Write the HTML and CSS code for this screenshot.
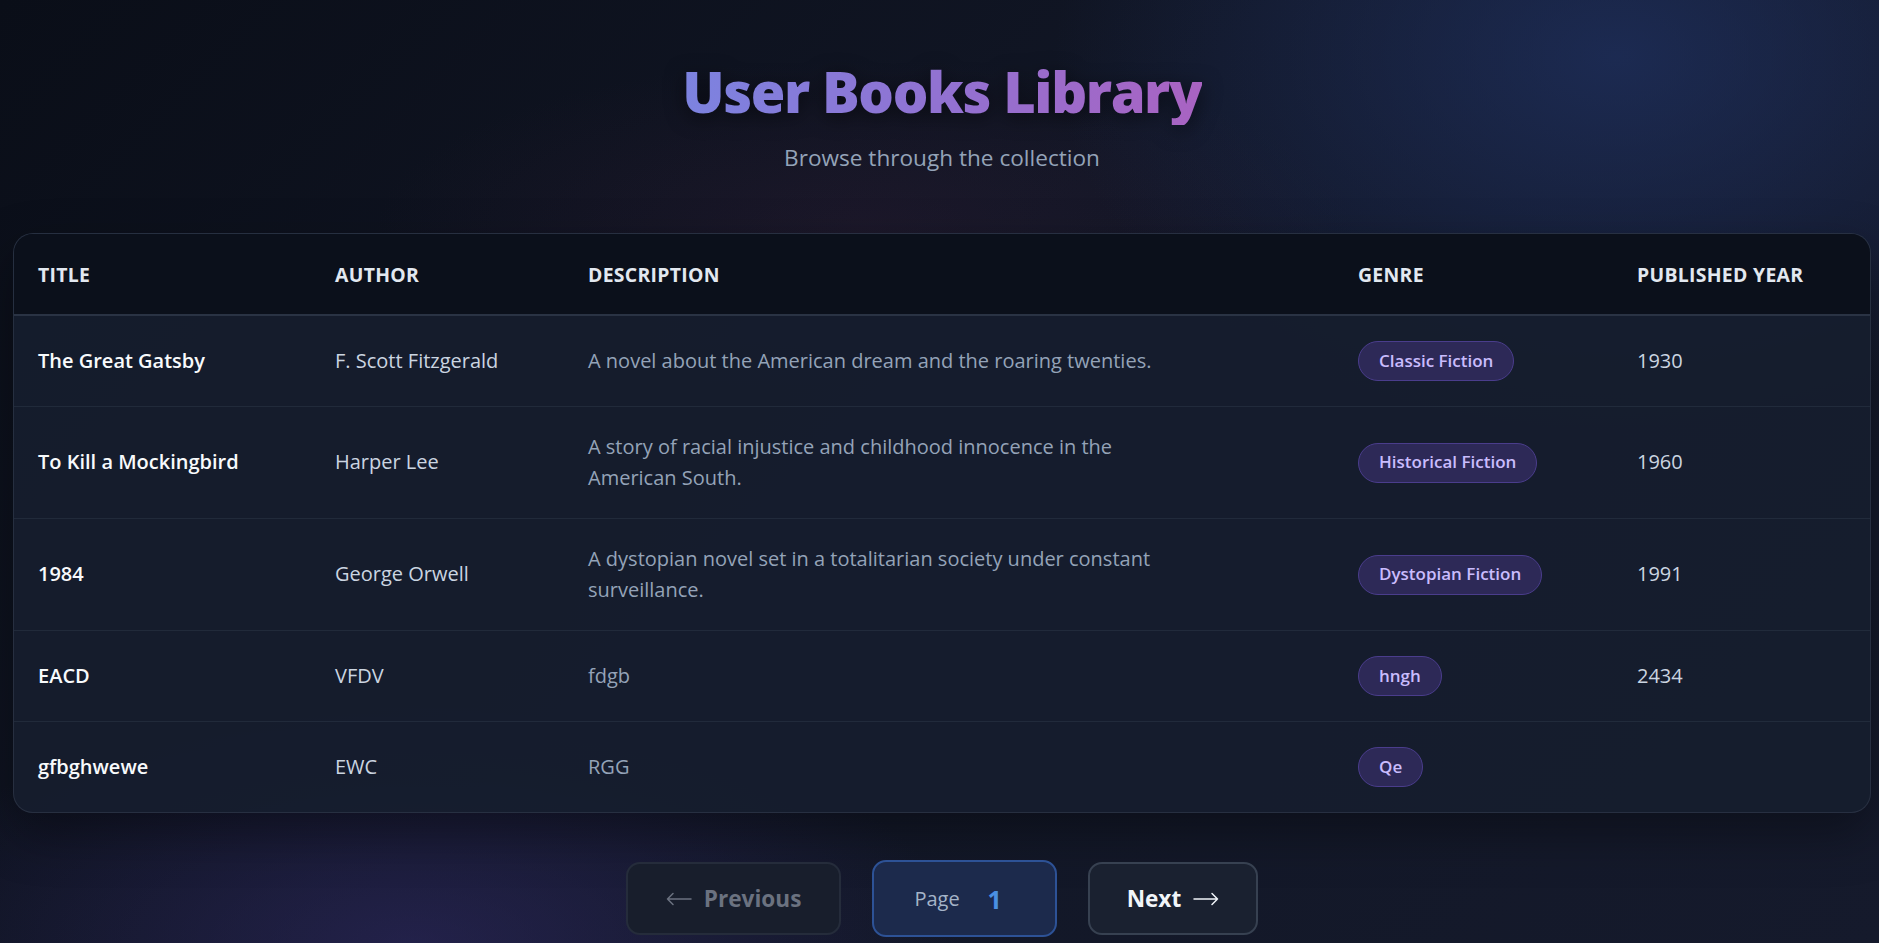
FILE: index.html
```html
<!DOCTYPE html>
<html lang="en">
<head>
<meta charset="utf-8">
<title>User Books Library</title>
<link rel="stylesheet" href="styles.css">
</head>
<body>
<div class="page">
  <header class="hero">
    <h1 class="hero-title">User Books Library</h1>
    <p class="hero-sub">Browse through the collection</p>
  </header>

  <div class="card">
    <table class="books">
      <colgroup>
        <col class="c-title">
        <col class="c-author">
        <col class="c-desc">
        <col class="c-genre">
        <col class="c-year">
      </colgroup>
      <thead>
        <tr>
          <th>Title</th>
          <th>Author</th>
          <th>Description</th>
          <th>Genre</th>
          <th>Published Year</th>
        </tr>
      </thead>
      <tbody>
        <tr>
          <td class="t-title">The Great Gatsby</td>
          <td class="t-author">F. Scott Fitzgerald</td>
          <td class="t-desc"><div class="desc">A novel about the American dream and the roaring twenties.</div></td>
          <td><span class="badge">Classic Fiction</span></td>
          <td class="t-year">1930</td>
        </tr>
        <tr>
          <td class="t-title">To Kill a Mockingbird</td>
          <td class="t-author">Harper Lee</td>
          <td class="t-desc"><div class="desc">A story of racial injustice and childhood innocence in the American South.</div></td>
          <td><span class="badge">Historical Fiction</span></td>
          <td class="t-year">1960</td>
        </tr>
        <tr>
          <td class="t-title">1984</td>
          <td class="t-author">George Orwell</td>
          <td class="t-desc"><div class="desc">A dystopian novel set in a totalitarian society under constant surveillance.</div></td>
          <td><span class="badge">Dystopian Fiction</span></td>
          <td class="t-year">1991</td>
        </tr>
        <tr>
          <td class="t-title">EACD</td>
          <td class="t-author">VFDV</td>
          <td class="t-desc"><div class="desc">fdgb</div></td>
          <td><span class="badge">hngh</span></td>
          <td class="t-year">2434</td>
        </tr>
        <tr>
          <td class="t-title">gfbghwewe</td>
          <td class="t-author">EWC</td>
          <td class="t-desc"><div class="desc">RGG</div></td>
          <td><span class="badge">Qe</span></td>
          <td class="t-year"></td>
        </tr>
      </tbody>
    </table>
  </div>

  <nav class="pager">
    <button class="pbtn pbtn-prev" disabled>
      <svg class="arrow" width="26" height="14" viewBox="0 0 26 14" aria-hidden="true"><path d="M25 7H1.5M7 1.5L1.5 7l5.5 5.5" fill="none" stroke="currentColor" stroke-width="1.5" stroke-linecap="round" stroke-linejoin="round"/></svg>
      <span>Previous</span>
    </button>
    <div class="pbtn pbtn-page">Page <span class="pnum">1</span></div>
    <button class="pbtn pbtn-next">
      <span>Next</span>
      <svg class="arrow" width="26" height="14" viewBox="0 0 26 14" aria-hidden="true"><path d="M1 7h23.5M19 1.5l5.5 5.5-5.5 5.5" fill="none" stroke="currentColor" stroke-width="1.5" stroke-linecap="round" stroke-linejoin="round"/></svg>
    </button>
  </nav>
</div>
</body>
</html>
```

FILE: styles.css
```css
* { box-sizing: border-box; }

html {
  scrollbar-width: none;
}

html, body {
  margin: 0;
  padding: 0;
}

body {
  min-height: 100vh;
  font-family: "Open Sans", "Noto Sans", sans-serif;
  color: #e2e8f0;
  background:
    radial-gradient(ellipse 780px 520px at 86% 6%, rgba(34, 54, 108, 0.62), transparent 72%),
    radial-gradient(ellipse 760px 330px at 22% 100%, rgba(52, 44, 110, 0.50), transparent 72%),
    radial-gradient(ellipse 700px 240px at 46% 24%, rgba(70, 34, 66, 0.22), transparent 70%),
    linear-gradient(135deg, #0a0e18 0%, #111625 45%, #151a2c 100%);
}

.page {
  padding: 58px 8px 4px 13px;
  display: flex;
  flex-direction: column;
  align-items: stretch;
}

.hero {
  display: flex;
  flex-direction: column;
  align-items: center;
}

.hero-title {
  margin: 0;
  font-size: 56px;
  line-height: 67px;
  font-weight: 800;
  letter-spacing: -1.4px;
  background: linear-gradient(90deg, #7c83e0 0%, #9470d0 55%, #a963c2 100%);
  -webkit-background-clip: text;
  background-clip: text;
  color: transparent;
  filter: drop-shadow(0 4px 10px rgba(0, 0, 0, 0.55));
}

.hero-sub {
  margin: 17px 0 0;
  font-size: 22.6px;
  line-height: 31px;
  color: #94a3b8;
}

.card {
  margin-top: 60px;
  border: 1px solid rgba(148, 163, 184, 0.14);
  border-radius: 20px;
  overflow: hidden;
  background: rgba(22, 29, 46, 0.92);
  box-shadow: 0 20px 50px rgba(0, 0, 0, 0.35);
}

.books {
  width: 100%;
  border-collapse: collapse;
  table-layout: fixed;
}

.c-title { width: 297px; }
.c-author { width: 253px; }
.c-desc { width: 770px; }
.c-genre { width: 279px; }

.books thead th {
  background: #0b101b;
  text-align: left;
  padding: 24.5px 24px;
  font-size: 19.4px;
  line-height: 31px;
  font-weight: 700;
  text-transform: uppercase;
  letter-spacing: 0.3px;
  color: #e2e8f0;
  border-bottom: 2px solid #2a3344;
}

.books tbody td {
  padding: 25px 24px;
  font-size: 20px;
  line-height: 30.5px;
  vertical-align: middle;
  border-bottom: 1px solid rgba(148, 163, 184, 0.10);
}

.books tbody tr:last-child td { border-bottom: none; }

.t-title {
  font-weight: 600;
  color: #f8fafc;
}

.t-author { color: #cbd5e1; }

.t-desc { color: #94a3b8; }

.desc { max-width: 580px; }

.t-year { color: #cbd5e1; }

.badge {
  display: inline-flex;
  align-items: center;
  height: 40px;
  padding: 0 20px;
  border-radius: 20px;
  background: #2d2957;
  border: 1px solid #4a3d8c;
  color: #c9bcfd;
  font-size: 17px;
  font-weight: 600;
}

.pager {
  margin-top: 47px;
  display: flex;
  justify-content: center;
  align-items: center;
  gap: 31px;
}

.pbtn {
  font-family: inherit;
  display: inline-flex;
  align-items: center;
  gap: 12px;
  height: 73px;
  padding: 0 37px;
  border-radius: 14px;
  border: 2px solid #374151;
  background: #1a2130;
  color: #f1f5f9;
  font-size: 22.6px;
  font-weight: 700;
}

.arrow {
  display: block;
  flex: none;
}

.pbtn-prev {
  padding: 0 38px;
  color: #6b7280;
  border-color: #252c3b;
  background: #181e2c;
}

.pbtn-page {
  gap: 0;
  height: 77px;
  padding: 0 40px;
  border-color: #2d5296;
  background: #1c2a4c;
  color: #a5b4c8;
  font-size: 20px;
  font-weight: 400;
}

.pnum {
  display: inline-block;
  width: 40px;
  margin-left: 15px;
  text-align: center;
  color: #4a90e2;
  font-size: 25px;
  font-weight: 700;
}
```
